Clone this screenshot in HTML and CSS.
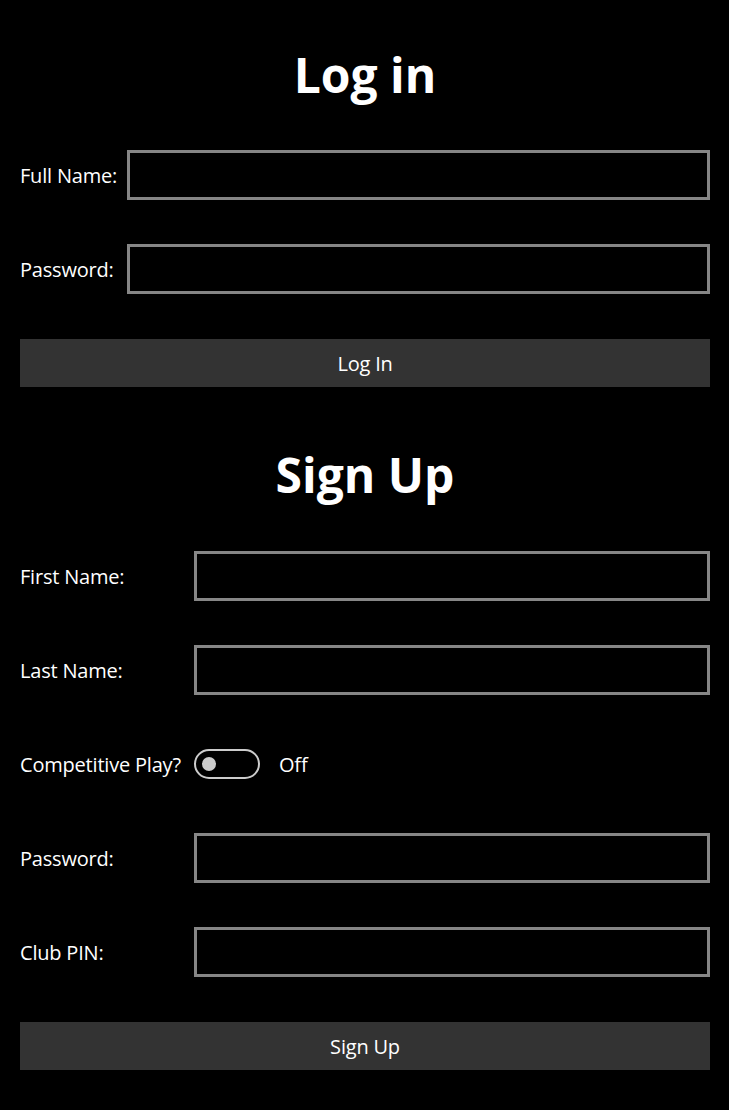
FILE: index.html
```html
<!DOCTYPE html>
<html lang="en">
<head>
<meta charset="utf-8">
<title>Log in</title>
<link rel="stylesheet" href="styles.css">
</head>
<body>
<main class="page">
  <section class="section login">
    <h1 class="title">Log in</h1>
    <div class="form form-login">
      <label class="label" for="fullname">Full Name:</label>
      <input class="field" id="fullname" type="text">
      <label class="label" for="loginpw">Password:</label>
      <input class="field" id="loginpw" type="password">
    </div>
    <button class="action" type="button">Log In</button>
  </section>
  <section class="section signup">
    <h1 class="title">Sign Up</h1>
    <div class="form form-signup">
      <label class="label" for="first">First Name:</label>
      <input class="field" id="first" type="text">
      <label class="label" for="last">Last Name:</label>
      <input class="field" id="last" type="text">
      <span class="label">Competitive Play?</span>
      <div class="toggle-row">
        <span class="toggle"><span class="knob"></span></span>
        <span class="toggle-text">Off</span>
      </div>
      <label class="label" for="signpw">Password:</label>
      <input class="field" id="signpw" type="password">
      <label class="label" for="pin">Club PIN:</label>
      <input class="field" id="pin" type="text">
    </div>
    <button class="action" type="button">Sign Up</button>
  </section>
</main>
</body>
</html>
```
FILE: styles.css
```css
html, body {
  margin: 0;
  padding: 0;
  background: #000;
  color: #fff;
  font-family: "Open Sans", "Noto Sans", sans-serif;
}

.page {
  padding: 45px 19px 0 20px;
}

.title {
  margin: 0;
  font-size: 48px;
  line-height: 60px;
  font-weight: 700;
  text-align: center;
}

.form {
  display: grid;
  column-gap: 10px;
  row-gap: 44px;
  align-items: center;
}

.form-login {
  margin-top: 45px;
  grid-template-columns: 97px 1fr;
}

.form-signup {
  margin-top: 46px;
  grid-template-columns: 164px 1fr;
}

.label {
  font-size: 20px;
  line-height: 28px;
  padding-top: 2px;
  letter-spacing: -0.2px;
  white-space: nowrap;
}

.field {
  display: block;
  box-sizing: border-box;
  width: 100%;
  height: 50px;
  margin: 0;
  border: 3px solid #868686;
  background: #000;
  color: #fff;
  font: inherit;
  padding: 0 10px;
  outline: none;
}

.toggle-row {
  display: flex;
  align-items: center;
  height: 50px;
  gap: 19px;
}

.toggle {
  box-sizing: border-box;
  width: 66px;
  height: 30px;
  border: 2.5px solid #cccccc;
  border-radius: 15px;
  display: flex;
  align-items: center;
  padding-left: 6px;
}

.knob {
  width: 14px;
  height: 14px;
  border-radius: 50%;
  background: #cccccc;
}

.toggle-text {
  font-size: 20px;
  line-height: 28px;
  padding-top: 2px;
  letter-spacing: -0.2px;
}

.action {
  display: block;
  width: 100%;
  height: 48px;
  margin: 45px 0 0;
  border: 0;
  background: #333333;
  color: #fff;
  font-family: inherit;
  font-size: 20px;
  letter-spacing: -0.2px;
  padding: 0;
}

.signup {
  margin-top: 58px;
}
```
